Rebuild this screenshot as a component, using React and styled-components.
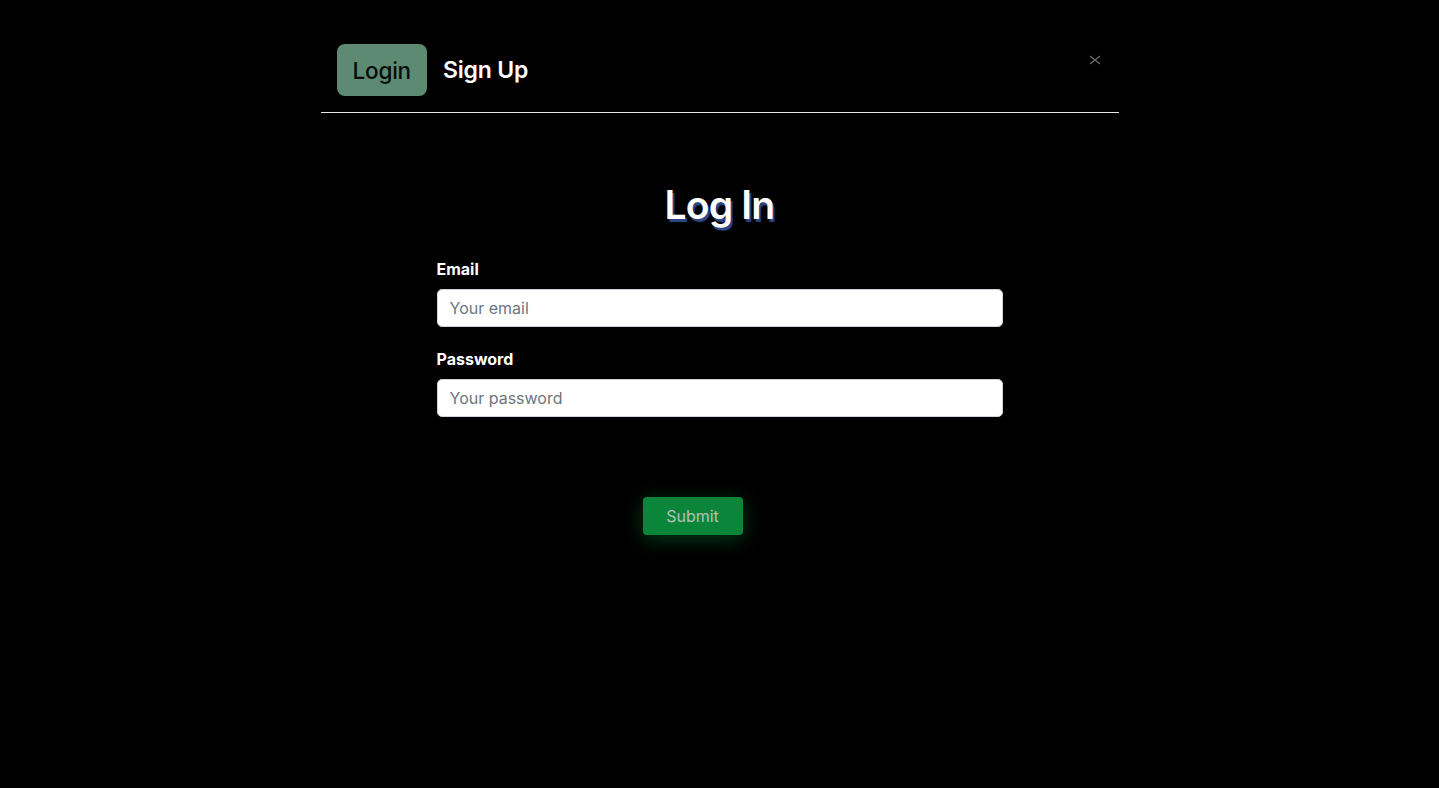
import React from 'react'
import styled, { createGlobalStyle } from 'styled-components'

const Global = createGlobalStyle`
  * { box-sizing: border-box; }
  body {
    margin: 0;
    background: #000;
    font-family: Inter, "Noto Sans", "Liberation Sans", sans-serif;
    color: #fff;
  }
`

const Page = styled.div`
  min-height: 788px;
  padding-top: 28px;
  display: flex;
  justify-content: center;
  align-items: flex-start;
`

const Dialog = styled.div`
  width: 800px;
  background: #000;
  border: 1px solid #000;
  border-radius: 8px;
  padding-bottom: 120px;
`

const Header = styled.div`
  display: flex;
  align-items: center;
  gap: 16px;
  padding: 15px 15px 16px 16px;
  border-bottom: 1px solid #e6e6e6;
`

const Tab = styled.button`
  height: 52px;
  border: none;
  border-radius: 8px;
  font-family: inherit;
  font-size: ${p => (p.$active ? '22.5px' : '23px')};
  font-weight: ${p => (p.$active ? 500 : 600)};
  letter-spacing: -0.2px;
  background: ${p => (p.$active ? '#5c8a72' : 'transparent')};
  color: ${p => (p.$active ? '#0b0b0b' : '#fff')};
  padding: ${p => (p.$active ? '0 16px' : '0')};
  cursor: pointer;
`

const Close = styled.button`
  margin-left: auto;
  align-self: flex-start;
  margin-top: 6px;
  margin-right: -2px;
  background: none;
  border: none;
  padding: 4px;
  cursor: pointer;
  display: flex;
`

const Body = styled.div`
  display: flex;
  flex-direction: column;
  align-items: center;
  padding-top: 69px;
`

const Title = styled.h1`
  margin: 0 0 28px;
  font-size: 39px;
  font-weight: 600;
  line-height: 1.2;
  letter-spacing: -0.8px;
  color: #fff;
  text-shadow: 2px 3px 1px #2f4788;
`

const Form = styled.form`
  width: 566px;
  display: flex;
  flex-direction: column;
`

const Field = styled.div`
  display: flex;
  flex-direction: column;
  margin-bottom: 20px;
`

const Label = styled.label`
  font-size: 16px;
  font-weight: 700;
  line-height: 24px;
  margin-bottom: 8px;
  color: #fff;
`

const Input = styled.input`
  height: 38px;
  padding: 6px 12px;
  border: 1px solid #ced4da;
  border-radius: 5px;
  background: #fff;
  font-family: inherit;
  font-size: 16px;
  color: #212529;
  &::placeholder { color: #6c757d; }
`

const Actions = styled.div`
  display: flex;
  justify-content: center;
  padding-top: 60px;
  padding-right: 54px;
`

const Submit = styled.button`
  width: 100px;
  height: 38px;
  border: none;
  border-radius: 4px;
  background: #0b8539;
  color: #b3c2b8;
  font-family: inherit;
  font-size: 16px;
  box-shadow: 0 4px 20px rgba(11, 133, 57, 0.45);
  cursor: pointer;
`

export default function App() {
  return (
    <>
      <Global />
      <Page>
        <Dialog>
          <Header>
            <Tab $active>Login</Tab>
            <Tab>Sign Up</Tab>
            <Close aria-label="Close">
              <svg width="14" height="12" viewBox="0 0 14 12">
                <path d="M2 2 L12 10 M12 2 L2 10" stroke="#6f6f6f" strokeWidth="1.2" fill="none" />
              </svg>
            </Close>
          </Header>
          <Body>
            <Title>Log In</Title>
            <Form onSubmit={e => e.preventDefault()}>
              <Field>
                <Label>Email</Label>
                <Input type="email" placeholder="Your email" />
              </Field>
              <Field>
                <Label>Password</Label>
                <Input type="password" placeholder="Your password" />
              </Field>
              <Actions>
                <Submit type="submit">Submit</Submit>
              </Actions>
            </Form>
          </Body>
        </Dialog>
      </Page>
    </>
  )
}
